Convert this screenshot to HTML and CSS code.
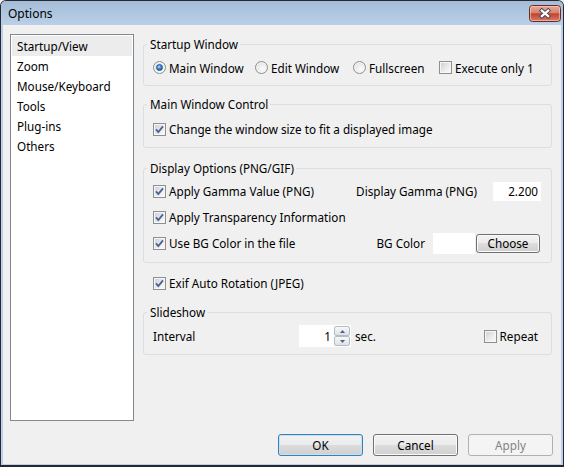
FILE: index.html
```html
<!DOCTYPE html>
<html>
<head>
<meta charset="utf-8">
<title>Options</title>
<link rel="stylesheet" href="styles.css">
</head>
<body>
<div class="window">
  <div class="titlebar">
    <span class="title">Options</span>
    <span class="close">
      <svg width="32" height="17" viewBox="0 0 32 17">
        <defs>
          <linearGradient id="cg" x1="0" y1="0" x2="0" y2="1">
            <stop offset="0" stop-color="#e9ab9d"/>
            <stop offset="0.45" stop-color="#d8836f"/>
            <stop offset="0.52" stop-color="#c1432c"/>
            <stop offset="1" stop-color="#d6806d"/>
          </linearGradient>
        </defs>
        <rect x="0.5" y="0.5" width="31" height="16" rx="3" fill="url(#cg)" stroke="#6b2a22"/>
        <rect x="1.5" y="1.5" width="29" height="14" rx="2" fill="none" stroke="#f6d2c9" stroke-opacity="0.6"/>
        <path d="M12.8 5.6 L19.2 11.2 M19.2 5.6 L12.8 11.2" stroke="#3e3f58" stroke-width="4" stroke-linecap="square"/>
        <path d="M12.8 5.6 L19.2 11.2 M19.2 5.6 L12.8 11.2" stroke="#ffffff" stroke-width="2.2" stroke-linecap="square"/>
      </svg>
    </span>
  </div>
  <div class="client">
    <div class="main">
      <ul class="list">
        <li class="sel">Startup/View</li>
        <li>Zoom</li>
        <li>Mouse/Keyboard</li>
        <li>Tools</li>
        <li>Plug-ins</li>
        <li>Others</li>
      </ul>
      <div class="panel">
        <fieldset class="group g1">
          <legend>Startup Window</legend>
          <div class="body b1">
            <div class="radios">
              <span class="opt"><span class="radio"><span class="dot"></span></span>Main Window</span>
              <span class="opt"><span class="radio"></span>Edit Window</span>
              <span class="opt"><span class="radio"></span>Fullscreen</span>
              <span class="opt"><span class="cb"></span>Execute only 1</span>
            </div>
          </div>
        </fieldset>

        <fieldset class="group g2">
          <legend>Main Window Control</legend>
          <div class="body b2">
            <div class="row r20">
              <span class="opt"><span class="cb"><svg width="11" height="11" viewBox="0 0 11 11"><path d="M2 5.4 L4.3 8 L9 2.4" fill="none" stroke="#4a6192" stroke-width="1.8"/></svg></span>Change the window size to fit a displayed image</span>
            </div>
          </div>
        </fieldset>

        <fieldset class="group g3">
          <legend>Display Options (PNG/GIF)</legend>
          <div class="body b3">
            <div class="row r26">
              <span class="opt"><span class="cb"><svg width="11" height="11" viewBox="0 0 11 11"><path d="M2 5.4 L4.3 8 L9 2.4" fill="none" stroke="#4a6192" stroke-width="1.8"/></svg></span>Apply Gamma Value (PNG)</span>
              <span class="push gamma-label">Display Gamma (PNG)</span>
              <span class="edit gamma">2.200</span>
            </div>
            <div class="row r26">
              <span class="opt"><span class="cb"><svg width="11" height="11" viewBox="0 0 11 11"><path d="M2 5.4 L4.3 8 L9 2.4" fill="none" stroke="#4a6192" stroke-width="1.8"/></svg></span>Apply Transparency Information</span>
            </div>
            <div class="row r26">
              <span class="opt"><span class="cb"><svg width="11" height="11" viewBox="0 0 11 11"><path d="M2 5.4 L4.3 8 L9 2.4" fill="none" stroke="#4a6192" stroke-width="1.8"/></svg></span>Use BG Color in the file</span>
              <span class="push bg-label">BG Color</span>
              <span class="swatch"></span>
              <span class="btn choose">Choose</span>
            </div>
          </div>
        </fieldset>

        <div class="row r20 exif">
          <span class="opt"><span class="cb"><svg width="11" height="11" viewBox="0 0 11 11"><path d="M2 5.4 L4.3 8 L9 2.4" fill="none" stroke="#4a6192" stroke-width="1.8"/></svg></span>Exif Auto Rotation (JPEG)</span>
        </div>

        <fieldset class="group g4">
          <legend>Slideshow</legend>
          <div class="body b4">
            <div class="row r22">
              <span class="interval">Interval</span>
              <span class="spin">
                <span class="spin-val">1</span>
                <span class="spin-btns">
                  <span class="sb"><svg width="5" height="3" viewBox="0 0 5 3"><path d="M0 3 L2.5 0 L5 3 Z" fill="#4d6185"/></svg></span>
                  <span class="sb"><svg width="5" height="3" viewBox="0 0 5 3"><path d="M0 0 L5 0 L2.5 3 Z" fill="#4d6185"/></svg></span>
                </span>
              </span>
              <span class="sec">sec.</span>
              <span class="opt push"><span class="cb"></span>Repeat</span>
            </div>
          </div>
        </fieldset>
      </div>
    </div>
    <div class="buttons">
      <span class="btn default">OK</span>
      <span class="btn">Cancel</span>
      <span class="btn disabled">Apply</span>
    </div>
  </div>
</div>
</body>
</html>
```

FILE: styles.css
```css
html, body {
  margin: 0;
  padding: 0;
}
body {
  font-family: "Noto Sans", "Open Sans", sans-serif;
  font-size: 11.7px;
  color: #000;
  background: #f0f0f0;
}
.window {
  width: 564px;
  height: 467px;
  box-sizing: border-box;
  border: 1px solid #262a30;
  border-bottom-width: 2px;
  border-radius: 6px 6px 0 0;
  background: #b9d1ea;
  display: flex;
  flex-direction: column;
  overflow: hidden;
}
.titlebar {
  height: 24px;
  flex: none;
  display: flex;
  align-items: flex-start;
  padding-left: 7px;
  background: linear-gradient(#a4bcd7, #bad0e8);
}
.title {
  line-height: 26px;
  font-size: 12px;
}
.close {
  margin: 4px 2px 0 auto;
  width: 32px;
  height: 17px;
  display: flex;
}
.client {
  flex: 1;
  margin: 0 2px 1px;
  background: #f0f0f0;
  padding: 9px 8px 8px 7px;
  display: flex;
  flex-direction: column;
}
.main {
  display: flex;
  gap: 9px;
  height: 387px;
  flex: none;
}
.list {
  width: 124px;
  height: 387px;
  box-sizing: border-box;
  border: 1px solid #828790;
  background: #fff;
  margin: 0;
  padding: 1px 1px;
  list-style: none;
}
.list li {
  height: 20px;
  line-height: 21px;
  padding-left: 5px;
  white-space: nowrap;
}
.list li.sel {
  background: #ececec;
}
.panel {
  width: 409px;
  margin-top: 2px;
  display: flex;
  flex-direction: column;
}
.group {
  margin: 0;
  padding: 0;
  border: 1px solid #d5dfe5;
  border-radius: 3px;
  min-width: 0;
}
.group legend {
  margin-left: 3px;
  padding: 0 2px 0 3px;
  line-height: 16px;
}
.g2 { margin-top: 10px; }
.g3 { margin-top: 12px; }
.g4 { margin-top: 11px; }
.exif {
  margin-top: 10px;
  padding-left: 10px;
}
.b1 { padding: 5px 9px 7px; }
.b2 { padding: 7px 9px 8px; }
.b3 { padding: 2px 10px 6px 9px; }
.b4 { padding: 5px 13px 7px 9px; }

.row {
  display: flex;
  align-items: center;
}
.r20 { height: 20px; }
.r22 { height: 22px; }
.r26 { height: 26px; }
.radios {
  display: grid;
  grid-template-columns: 102px 98px 86px auto;
  height: 21px;
  align-items: center;
}
.opt {
  display: flex;
  align-items: center;
  white-space: nowrap;
}
.push { margin-left: auto; }

.cb {
  width: 13px;
  height: 13px;
  box-sizing: border-box;
  border: 1px solid #8e8f8f;
  background: linear-gradient(135deg, #c9ced4 0%, #eceef0 60%, #fafafa 100%);
  box-shadow: inset 0 0 0 1px #f6f6f6;
  margin-right: 3px;
  display: flex;
  flex: none;
}
.radio {
  width: 13px;
  height: 13px;
  box-sizing: border-box;
  border: 1px solid #8b8e92;
  border-radius: 50%;
  background: radial-gradient(circle at 60% 65%, #fbfbfb 0%, #e9e9e9 55%, #cfd2d6 100%);
  box-shadow: inset 0 0 0 1px #f7f7f7;
  margin-right: 3px;
  display: flex;
  align-items: center;
  justify-content: center;
  flex: none;
}
.dot {
  width: 7px;
  height: 7px;
  box-sizing: border-box;
  border-radius: 50%;
  border: 1px solid #24508c;
  background: radial-gradient(circle at 40% 35%, #b7e2ff 0%, #3a88d6 45%, #123f86 100%);
}

.gamma-label { margin-right: 16px; }
.edit {
  background: #fff;
  text-align: right;
  box-sizing: border-box;
}
.gamma {
  width: 48px;
  height: 19px;
  line-height: 19px;
  padding-right: 3px;
}
.bg-label { margin-right: 8px; }
.swatch {
  width: 42px;
  height: 21px;
  background: #fff;
  margin-right: 1px;
}
.btn {
  box-sizing: border-box;
  border: 1px solid #707070;
  border-radius: 3px;
  background: linear-gradient(#f2f2f2 0%, #ebebeb 49%, #dddddd 50%, #cfcfcf 100%);
  box-shadow: inset 0 0 0 1px #fbfbfb;
  display: flex;
  align-items: center;
  justify-content: center;
  white-space: nowrap;
}
.choose {
  width: 64px;
  height: 19px;
  margin-right: 1px;
}
.interval { width: 146px; }
.spin {
  width: 52px;
  height: 22px;
  background: #fff;
  display: flex;
}
.spin-val {
  flex: 1;
  text-align: right;
  line-height: 22px;
  padding-right: 3px;
}
.spin-btns {
  width: 17px;
  padding: 1px 1px 1px 0;
  display: flex;
  flex-direction: column;
  box-sizing: border-box;
}
.sb {
  flex: 1;
  border: 1px solid #b5bcc6;
  border-radius: 2px;
  background: linear-gradient(#f7f8f9, #dde1e6);
  display: flex;
  align-items: center;
  justify-content: center;
}
.sec { margin-left: 4px; }

.buttons {
  display: flex;
  justify-content: flex-end;
  gap: 10px;
  margin-top: 13px;
}
.buttons .btn {
  width: 85px;
  height: 22px;
}
.btn.default {
  border-color: #3c7fb1;
  box-shadow: inset 0 0 0 1px #bfe4f8;
}
.btn.disabled {
  border-color: #adb2b5;
  background: #f4f4f4;
  box-shadow: none;
  color: #838383;
}
```
